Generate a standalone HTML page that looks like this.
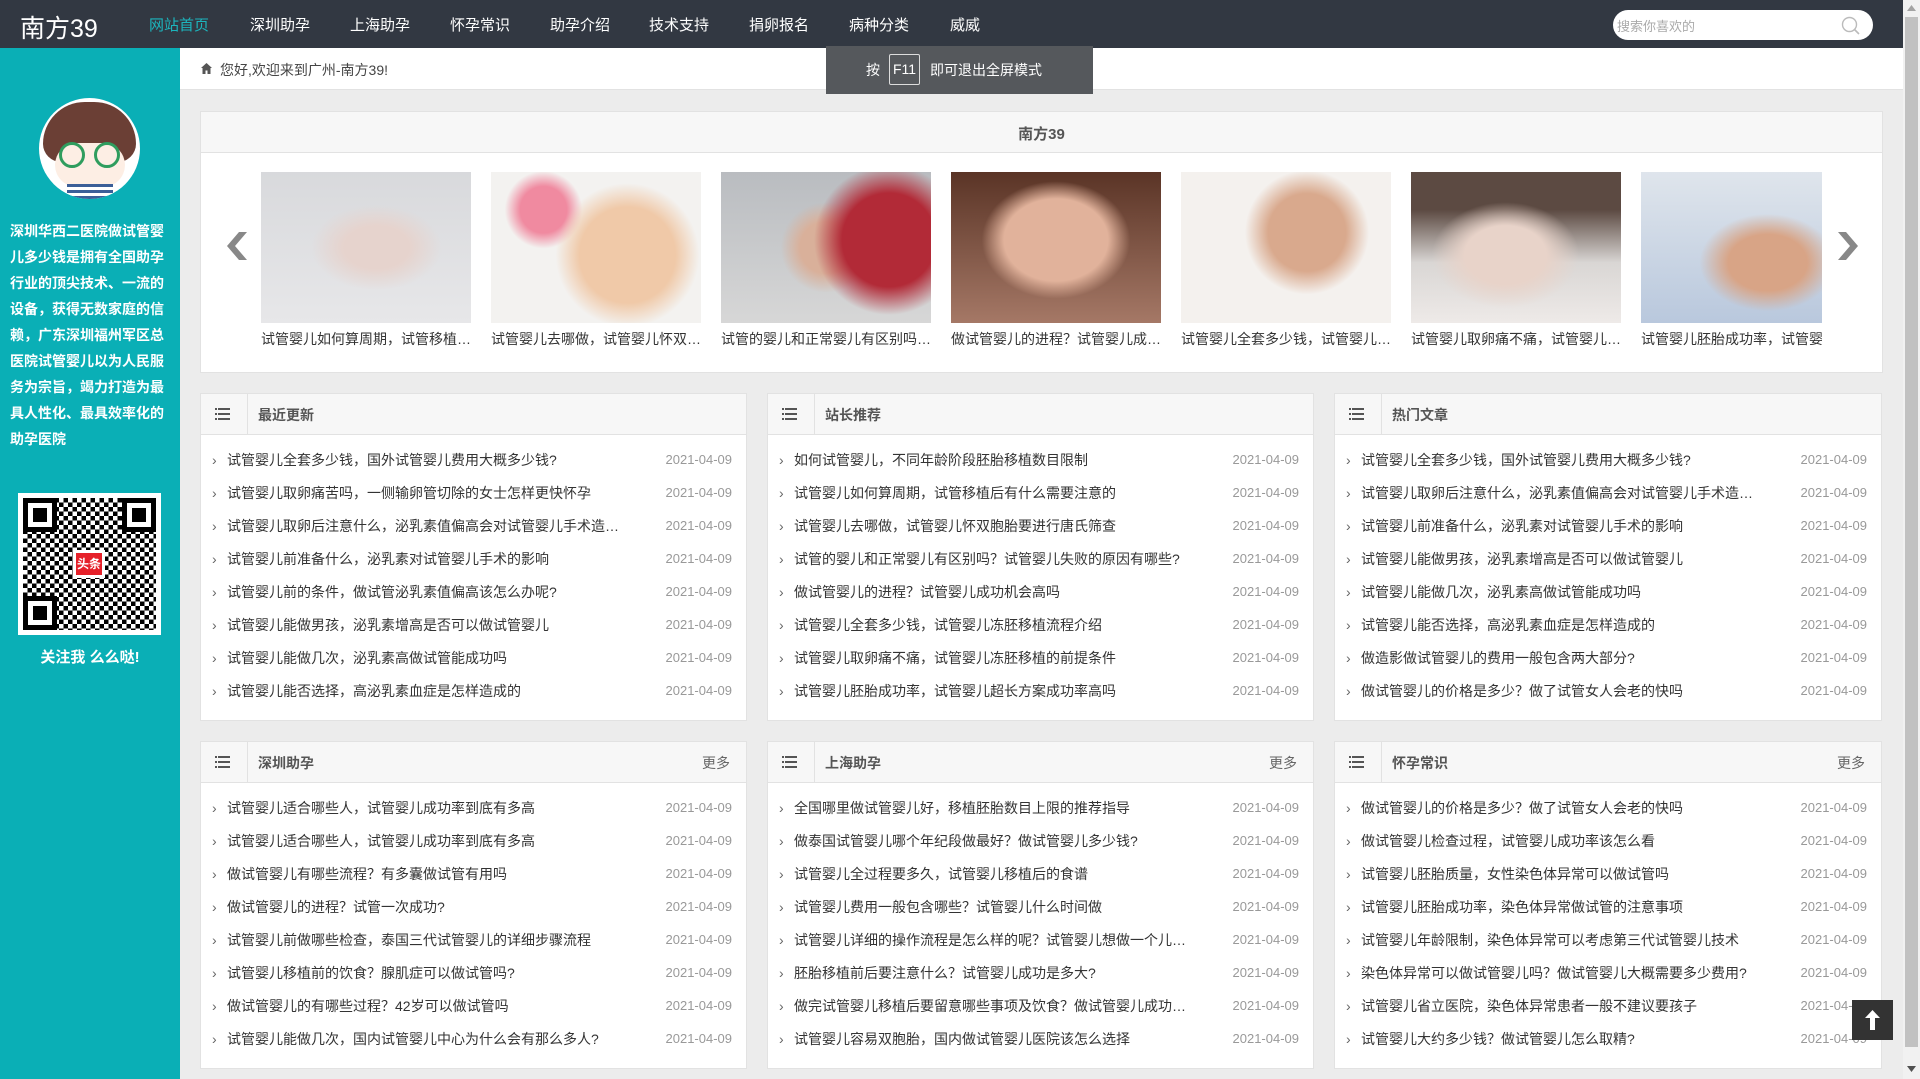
<!DOCTYPE html>
<html><head><meta charset="utf-8"><style>
*{margin:0;padding:0;box-sizing:border-box}
body{width:1920px;height:1079px;overflow:hidden;background:#ececec;font-family:"Liberation Sans","Noto Sans CJK SC",sans-serif;position:relative;color:#333}
.a{position:absolute}
.nav{left:0;top:0;width:1903px;height:48px;background:#323842}
.nav .logo{left:20px;top:9px;color:#fff;font-size:25px}
.nav .it{top:14px;color:#fff;font-size:15px}
.side{left:0;top:48px;width:180px;height:1031px;background:#0aafb6}
.crumb{left:180px;top:48px;width:1723px;height:42px;background:#fff;border-bottom:1px solid #e2e2e2}
.panel{background:#fff;border:1px solid #e2e2e2}
.ph{left:0;top:0;right:0;height:41px;background:#f7f7f7;border-bottom:1px solid #e2e2e2}
.ic{left:0;top:0;width:47px;height:40px;border-right:1px solid #e2e2e2}
.ic i{position:absolute;left:17px;width:12px;height:2px;background:#555}
.ic b{position:absolute;left:14px;width:2px;height:2px;background:#555}
.pt{left:57px;top:11px;font-size:14px;font-weight:bold;color:#555}
.more{right:16px;top:11px;font-size:14px;color:#666}
ul{position:absolute;left:0;right:0;top:57px;list-style:none}
li{height:33px;line-height:18px;font-size:14px;position:relative;padding-left:26px;padding-right:120px;white-space:nowrap;overflow:hidden;text-overflow:ellipsis;color:#333}
li:before{content:"›";position:absolute;left:11px;top:0;color:#666;font-size:14px}
li span{position:absolute;right:14px;top:0;color:#999;font-size:13px}
.img{top:172px;width:210px;height:151px}
.cap{top:329px;width:210px;font-size:14px;white-space:nowrap;overflow:hidden;text-overflow:ellipsis;color:#333}
</style></head><body>
<div class="a nav">
<div class="a logo">南方39</div>
<div class="a it" style="left:149px;color:#1cb5bd">网站首页</div>
<div class="a it" style="left:250px">深圳助孕</div>
<div class="a it" style="left:350px">上海助孕</div>
<div class="a it" style="left:450px">怀孕常识</div>
<div class="a it" style="left:550px">助孕介绍</div>
<div class="a it" style="left:649px">技术支持</div>
<div class="a it" style="left:749px">捐卵报名</div>
<div class="a it" style="left:849px">病种分类</div>
<div class="a it" style="left:950px">威威</div>
<div class="a" style="left:1613px;top:10px;width:260px;height:30px;background:#fff;border-radius:15px"><span class="a" style="left:4px;top:6px;font-size:13px;color:#aaa">搜索你喜欢的</span>
<svg class="a" style="left:228px;top:6px" width="20" height="20" viewBox="0 0 20 20"><circle cx="8.5" cy="8.5" r="7" fill="none" stroke="#bbb" stroke-width="1.4"/><path d="M13.5 13.5L18 18" stroke="#bbb" stroke-width="1.6"/></svg></div>
</div>
<div class="a side">
<div class="a" style="left:39px;top:50px;width:101px;height:101px;border-radius:50%;background:#fff;overflow:hidden">
<div class="a" style="left:4px;top:4px;width:93px;height:60px;border-radius:46px 46px 20px 20px;background:#6b3f35"></div>
<div class="a" style="left:16px;top:45px;width:70px;height:44px;border-radius:30px;background:#fdeee4"></div>
<div class="a" style="left:20px;top:44px;width:26px;height:26px;border-radius:50%;border:3px solid #2f9d5e"></div>
<div class="a" style="left:55px;top:44px;width:26px;height:26px;border-radius:50%;border:3px solid #2f9d5e"></div>
<div class="a" style="left:28px;top:86px;width:46px;height:15px;background:repeating-linear-gradient(#3b5f98 0 3px,#fff 3px 6px)"></div>
</div>
<div class="a" style="left:10px;top:170px;width:160px;font-size:14px;line-height:26px;color:#fff;font-weight:bold">深圳华西二医院做试管婴儿多少钱是拥有全国助孕行业的顶尖技术、一流的设备，获得无数家庭的信赖，广东深圳福州军区总医院试管婴儿以为人民服务为宗旨，竭力打造为最具人性化、最具效率化的助孕医院</div>
<div class="a" style="left:18px;top:445px;width:143px;height:142px;background:#fff;padding:5px">
<div style="width:133px;height:132px;background:repeating-conic-gradient(#000 0 25%,#fff 0 50%) 0 0/9px 9px;position:relative">
<div class="a" style="left:0;top:0;width:34px;height:34px;border:5px solid #000;background:#fff"><div style="margin:5px;width:14px;height:14px;background:#000"></div></div>
<div class="a" style="right:0;top:0;width:34px;height:34px;border:5px solid #000;background:#fff"><div style="margin:5px;width:14px;height:14px;background:#000"></div></div>
<div class="a" style="left:0;bottom:0;width:34px;height:34px;border:5px solid #000;background:#fff"><div style="margin:5px;width:14px;height:14px;background:#000"></div></div>
<div class="a" style="left:50px;top:52px;width:32px;height:28px;background:#fff;padding:3px"><div style="background:#e6212a;color:#fff;font-size:12px;font-weight:bold;height:22px;line-height:22px;text-align:center">头条</div></div>
</div></div>
<div class="a" style="left:0;top:598px;width:180px;text-align:center;color:#fff;font-size:15px;font-weight:bold">关注我 么么哒!</div>
</div>
<div class="a crumb">
<svg class="a" style="left:21px;top:15px" width="11" height="11" viewBox="0 0 11 11"><path d="M5.5 0L0 5h1.5v6h3V7.5h2V11h3V5H11z" fill="#555"/></svg>
<span class="a" style="left:40px;top:12px;font-size:14px;color:#444">您好,欢迎来到广州-南方39!</span>
</div>
<div class="a" style="left:826px;top:46px;width:267px;height:48px;background:#55585c;color:#fff;font-size:14px">
<span class="a" style="left:40px;top:14px">按</span>
<span class="a" style="left:63px;top:8px;width:31px;height:31px;border:1px solid #ddd;border-radius:2px;text-align:center;line-height:29px">F11</span>
<span class="a" style="left:104px;top:14px">即可退出全屏模式</span>
</div>
<div class="a panel" style="left:200px;top:111px;width:1683px;height:262px">
<div class="a ph"><div class="a" style="left:0;right:0;top:11px;text-align:center;font-size:15px;font-weight:bold;color:#555">南方39</div></div>
</div>
<svg class="a" style="left:221px;top:232px" width="26" height="28" viewBox="0 0 26 28"><path d="M18 0H26L14 14L26 28H18L6 14Z" fill="#888"/></svg>
<svg class="a" style="left:1838px;top:232px" width="26" height="28" viewBox="0 0 26 28"><path d="M8 0H0L12 14L0 28H8L20 14Z" fill="#888"/></svg>
<div class="a img" style="left:261px;background:radial-gradient(ellipse at 55% 50%,#e6d3cd 0 20%,transparent 40%),linear-gradient(#d8d9dc,#e7e7e9)"></div>
<div class="a img" style="left:491px;background:radial-gradient(circle at 65% 55%,#f0c9a8 0 30%,transparent 45%),radial-gradient(circle at 25% 25%,#f08aa0 0 12%,transparent 20%),#f3f2f0"></div>
<div class="a img" style="left:721px;background:radial-gradient(circle at 80% 45%,#b22a37 0 25%,transparent 40%),radial-gradient(circle at 50% 50%,#d9b09a 0 20%,transparent 35%),linear-gradient(#b9bcc0,#d7d7d7)"></div>
<div class="a img" style="left:951px;background:radial-gradient(ellipse at 50% 45%,#e1b29b 0 35%,transparent 50%),linear-gradient(#5a3426,#a57866)"></div>
<div class="a img" style="left:1181px;background:radial-gradient(circle at 60% 40%,#d9a98d 0 25%,transparent 40%),#f4f1ee"></div>
<div class="a img" style="left:1411px;background:radial-gradient(ellipse at 45% 55%,#e8d3c9 0 25%,transparent 45%),linear-gradient(#5c4a42 0 25%,#d9d6d4 60%,#eeeae8)"></div>
<div class="a img" style="left:1641px;width:181px;background:radial-gradient(ellipse at 70% 60%,#d8a486 0 22%,transparent 38%),linear-gradient(#dfe5ec,#b9c8dd)"></div>
<div class="a cap" style="left:261px">试管婴儿如何算周期，试管移植后有什么需要注意的</div>
<div class="a cap" style="left:491px">试管婴儿去哪做，试管婴儿怀双胞胎要进行</div>
<div class="a cap" style="left:721px">试管的婴儿和正常婴儿有区别吗？试管婴儿</div>
<div class="a cap" style="left:951px">做试管婴儿的进程？试管婴儿成功机会高吗</div>
<div class="a cap" style="left:1181px">试管婴儿全套多少钱，试管婴儿冻胚移植</div>
<div class="a cap" style="left:1411px">试管婴儿取卵痛不痛，试管婴儿冻胚移植</div>
<div class="a cap" style="left:1641px;width:181px;text-overflow:clip">试管婴儿胚胎成功率，试管婴儿</div>

<div class="a panel" style="left:200px;top:393px;width:547px;height:328px">
<div class="a ph"><div class="a ic"><b style="top:14px"></b><i style="top:14px"></i><b style="top:19px"></b><i style="top:19px"></i><b style="top:24px"></b><i style="top:24px"></i></div><div class="a pt">最近更新</div></div>
<ul><li>试管婴儿全套多少钱，国外试管婴儿费用大概多少钱?<span>2021-04-09</span></li><li>试管婴儿取卵痛苦吗，一侧输卵管切除的女士怎样更快怀孕<span>2021-04-09</span></li><li>试管婴儿取卵后注意什么，泌乳素值偏高会对试管婴儿手术造成影响吗<span>2021-04-09</span></li><li>试管婴儿前准备什么，泌乳素对试管婴儿手术的影响<span>2021-04-09</span></li><li>试管婴儿前的条件，做试管泌乳素值偏高该怎么办呢?<span>2021-04-09</span></li><li>试管婴儿能做男孩，泌乳素增高是否可以做试管婴儿<span>2021-04-09</span></li><li>试管婴儿能做几次，泌乳素高做试管能成功吗<span>2021-04-09</span></li><li>试管婴儿能否选择，高泌乳素血症是怎样造成的<span>2021-04-09</span></li></ul></div>
<div class="a panel" style="left:767px;top:393px;width:547px;height:328px">
<div class="a ph"><div class="a ic"><b style="top:14px"></b><i style="top:14px"></i><b style="top:19px"></b><i style="top:19px"></i><b style="top:24px"></b><i style="top:24px"></i></div><div class="a pt">站长推荐</div></div>
<ul><li>如何试管婴儿，不同年龄阶段胚胎移植数目限制<span>2021-04-09</span></li><li>试管婴儿如何算周期，试管移植后有什么需要注意的<span>2021-04-09</span></li><li>试管婴儿去哪做，试管婴儿怀双胞胎要进行唐氏筛查<span>2021-04-09</span></li><li>试管的婴儿和正常婴儿有区别吗？试管婴儿失败的原因有哪些?<span>2021-04-09</span></li><li>做试管婴儿的进程？试管婴儿成功机会高吗<span>2021-04-09</span></li><li>试管婴儿全套多少钱，试管婴儿冻胚移植流程介绍<span>2021-04-09</span></li><li>试管婴儿取卵痛不痛，试管婴儿冻胚移植的前提条件<span>2021-04-09</span></li><li>试管婴儿胚胎成功率，试管婴儿超长方案成功率高吗<span>2021-04-09</span></li></ul></div>
<div class="a panel" style="left:1334px;top:393px;width:548px;height:328px">
<div class="a ph"><div class="a ic"><b style="top:14px"></b><i style="top:14px"></i><b style="top:19px"></b><i style="top:19px"></i><b style="top:24px"></b><i style="top:24px"></i></div><div class="a pt">热门文章</div></div>
<ul><li>试管婴儿全套多少钱，国外试管婴儿费用大概多少钱?<span>2021-04-09</span></li><li>试管婴儿取卵后注意什么，泌乳素值偏高会对试管婴儿手术造成影响吗<span>2021-04-09</span></li><li>试管婴儿前准备什么，泌乳素对试管婴儿手术的影响<span>2021-04-09</span></li><li>试管婴儿能做男孩，泌乳素增高是否可以做试管婴儿<span>2021-04-09</span></li><li>试管婴儿能做几次，泌乳素高做试管能成功吗<span>2021-04-09</span></li><li>试管婴儿能否选择，高泌乳素血症是怎样造成的<span>2021-04-09</span></li><li>做造影做试管婴儿的费用一般包含两大部分?<span>2021-04-09</span></li><li>做试管婴儿的价格是多少？做了试管女人会老的快吗<span>2021-04-09</span></li></ul></div>

<div class="a panel" style="left:200px;top:741px;width:547px;height:328px">
<div class="a ph"><div class="a ic"><b style="top:14px"></b><i style="top:14px"></i><b style="top:19px"></b><i style="top:19px"></i><b style="top:24px"></b><i style="top:24px"></i></div><div class="a pt">深圳助孕</div><div class="a more">更多</div></div>
<ul><li>试管婴儿适合哪些人，试管婴儿成功率到底有多高<span>2021-04-09</span></li><li>试管婴儿适合哪些人，试管婴儿成功率到底有多高<span>2021-04-09</span></li><li>做试管婴儿有哪些流程？有多囊做试管有用吗<span>2021-04-09</span></li><li>做试管婴儿的进程？试管一次成功?<span>2021-04-09</span></li><li>试管婴儿前做哪些检查，泰国三代试管婴儿的详细步骤流程<span>2021-04-09</span></li><li>试管婴儿移植前的饮食？腺肌症可以做试管吗?<span>2021-04-09</span></li><li>做试管婴儿的有哪些过程？42岁可以做试管吗<span>2021-04-09</span></li><li>试管婴儿能做几次，国内试管婴儿中心为什么会有那么多人?<span>2021-04-09</span></li></ul></div>
<div class="a panel" style="left:767px;top:741px;width:547px;height:328px">
<div class="a ph"><div class="a ic"><b style="top:14px"></b><i style="top:14px"></i><b style="top:19px"></b><i style="top:19px"></i><b style="top:24px"></b><i style="top:24px"></i></div><div class="a pt">上海助孕</div><div class="a more">更多</div></div>
<ul><li>全国哪里做试管婴儿好，移植胚胎数目上限的推荐指导<span>2021-04-09</span></li><li>做泰国试管婴儿哪个年纪段做最好？做试管婴儿多少钱?<span>2021-04-09</span></li><li>试管婴儿全过程要多久，试管婴儿移植后的食谱<span>2021-04-09</span></li><li>试管婴儿费用一般包含哪些？试管婴儿什么时间做<span>2021-04-09</span></li><li>试管婴儿详细的操作流程是怎么样的呢？试管婴儿想做一个儿子可以吗<span>2021-04-09</span></li><li>胚胎移植前后要注意什么？试管婴儿成功是多大?<span>2021-04-09</span></li><li>做完试管婴儿移植后要留意哪些事项及饮食？做试管婴儿成功率高吗<span>2021-04-09</span></li><li>试管婴儿容易双胞胎，国内做试管婴儿医院该怎么选择<span>2021-04-09</span></li></ul></div>
<div class="a panel" style="left:1334px;top:741px;width:548px;height:328px">
<div class="a ph"><div class="a ic"><b style="top:14px"></b><i style="top:14px"></i><b style="top:19px"></b><i style="top:19px"></i><b style="top:24px"></b><i style="top:24px"></i></div><div class="a pt">怀孕常识</div><div class="a more">更多</div></div>
<ul><li>做试管婴儿的价格是多少？做了试管女人会老的快吗<span>2021-04-09</span></li><li>做试管婴儿检查过程，试管婴儿成功率该怎么看<span>2021-04-09</span></li><li>试管婴儿胚胎质量，女性染色体异常可以做试管吗<span>2021-04-09</span></li><li>试管婴儿胚胎成功率，染色体异常做试管的注意事项<span>2021-04-09</span></li><li>试管婴儿年龄限制，染色体异常可以考虑第三代试管婴儿技术<span>2021-04-09</span></li><li>染色体异常可以做试管婴儿吗？做试管婴儿大概需要多少费用?<span>2021-04-09</span></li><li>试管婴儿省立医院，染色体异常患者一般不建议要孩子<span>2021-04-09</span></li><li>试管婴儿大约多少钱？做试管婴儿怎么取精?<span>2021-04-09</span></li></ul></div>

<div class="a" style="left:1852px;top:1000px;width:41px;height:40px;background:#333">
<svg class="a" style="left:13px;top:10px" width="15" height="20" viewBox="0 0 15 20"><path d="M7.5 0L15 8H10V20H5V8H0Z" fill="#fff"/></svg></div>
<div class="a" style="left:1903px;top:0;width:17px;height:1079px;background:#f1f1f1">
<div class="a" style="left:2px;top:17px;width:13px;height:1030px;background:#c1c1c1"></div>
<svg class="a" style="left:4px;top:5px" width="9" height="6"><path d="M0 6L4.5 0L9 6Z" fill="#a3a3a3"/></svg>
<svg class="a" style="left:4px;top:1066px" width="9" height="6"><path d="M0 0L4.5 6L9 0Z" fill="#505050"/></svg>
</div>
</body></html>
